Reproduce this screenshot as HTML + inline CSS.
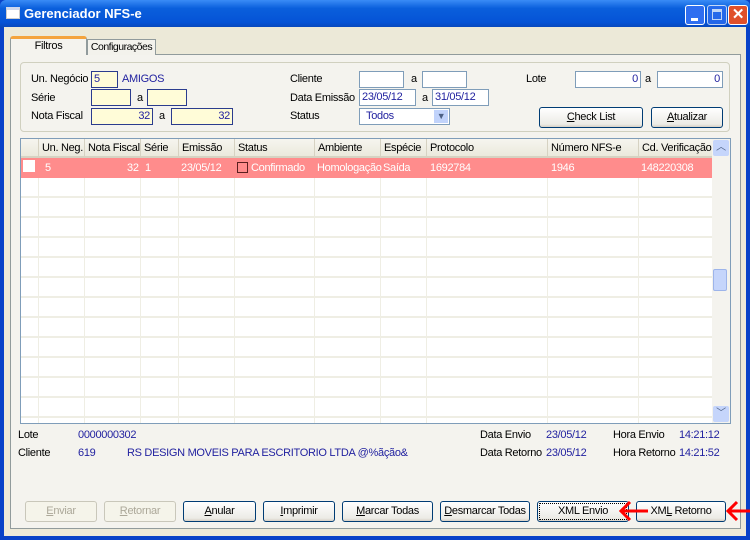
<!DOCTYPE html>
<html><head><meta charset="utf-8"><style>
*{margin:0;padding:0;box-sizing:border-box}
body{width:750px;height:540px;overflow:hidden;background:#0842c8;font-family:"Liberation Sans",sans-serif;font-size:11px;letter-spacing:-0.3px;color:#000;position:relative;white-space:nowrap}
.a{position:absolute}
.title{left:0;top:0;width:750px;height:28px;background:linear-gradient(#3a8cf6,#0a5fdc 30%,#0553d6 80%,#0846b8);border-radius:6px 6px 0 0}
.body{left:4px;top:27px;width:742px;height:509px;background:#ece9d8}
.panel{left:10px;top:54px;width:731px;height:475px;background:#f4f3ee;border:1px solid #919b9c}
.grp{left:20px;top:62px;width:710px;height:70px;border:1px solid #d0d0bf;border-radius:4px}
.in{position:absolute;height:17px;border:1px solid #7f9db9;background:#fff;color:#2222a0;font-size:11px;line-height:15px;padding:0 2px}
.y{background:#fffcd8;border-color:#2b3c8e}
.r{text-align:right}
.btn{position:absolute;height:21px;border:1px solid #003c74;border-radius:3px;background:linear-gradient(#fff,#ecebe6 85%,#d6d0c5);text-align:center;line-height:19px;font-size:11px}
.dis{border-color:#c9c7ba;color:#aca899;background:#f5f4ea}
.grid{left:20px;top:138px;width:711px;height:286px;background:#fff;border:1px solid #7f9db9;overflow:hidden}
.hd{position:absolute;top:0;height:19px;background:linear-gradient(#f6f5ef,#ebe9dc);border-bottom:2px solid #d6d2c2;line-height:19px;padding-left:3px;overflow:hidden}
.b{color:#2222a0}
u{text-decoration:underline}
</style></head><body>
<div class="a title"></div>
<div class="a" style="left:6px;top:7px;width:14px;height:12px;background:#fff;border:1px solid #ccc;border-top:3px solid #cfd9ee"></div>
<div class="a" style="left:24px;top:6px;color:#fff;font-weight:bold;font-size:13px;letter-spacing:0">Gerenciador NFS-e</div>
<div class="a" style="left:685px;top:5px;width:20px;height:20px;border:1px solid #fff;border-radius:3px;background:#2f6ef0"><div class="a" style="left:5px;top:12px;width:7px;height:3px;background:#fff"></div></div>
<div class="a" style="left:707px;top:5px;width:20px;height:20px;border:1px solid #fff;border-radius:3px;background:#2f6ef0;opacity:.75"><div class="a" style="left:4px;top:3px;width:10px;height:11px;border:1px solid #fff;border-top-width:3px"></div></div>
<div class="a" style="left:728px;top:5px;width:20px;height:20px;border:1px solid #fff;border-radius:3px;background:#e0502a;color:#fff;font-weight:bold;font-size:15px;text-align:center;line-height:18px">✕</div>
<div class="a body"></div>
<div class="a panel"></div>
<div class="a" style="left:10px;top:36px;width:77px;height:19px;background:#f4f3ee;border:1px solid #919b9c;border-bottom:none;border-top:3px solid #f4a33c;border-radius:3px 3px 0 0;text-align:center;line-height:14px">Filtros</div>
<div class="a" style="left:87px;top:39px;width:69px;height:16px;background:#f3f2ec;border:1px solid #919b9c;border-bottom:none;text-align:center;line-height:15px;font-size:10.5px;letter-spacing:-0.5px">Configurações</div>
<div class="a grp"></div>
<div class="a" style="left:31px;top:73px">Un. Negócio</div>
<div class="a" style="left:31px;top:92px">Série</div>
<div class="a" style="left:31px;top:110px">Nota Fiscal</div>
<div class="in y" style="left:91px;top:71px;width:27px">5</div>
<div class="a b" style="left:122px;top:73px">AMIGOS</div>
<div class="in y" style="left:91px;top:89px;width:40px"></div>
<div class="a" style="left:137px;top:92px">a</div>
<div class="in y" style="left:147px;top:89px;width:40px"></div>
<div class="in y r" style="left:91px;top:108px;width:62px">32</div>
<div class="a" style="left:159px;top:110px">a</div>
<div class="in y r" style="left:171px;top:108px;width:62px">32</div>
<div class="a" style="left:290px;top:73px">Cliente</div>
<div class="a" style="left:290px;top:92px">Data Emissão</div>
<div class="a" style="left:290px;top:110px">Status</div>
<div class="in" style="left:359px;top:71px;width:45px"></div>
<div class="a" style="left:411px;top:73px">a</div>
<div class="in" style="left:422px;top:71px;width:45px"></div>
<div class="in" style="left:359px;top:89px;width:57px">23/05/12</div>
<div class="a" style="left:422px;top:92px">a</div>
<div class="in" style="left:432px;top:89px;width:57px">31/05/12</div>
<div class="in" style="left:359px;top:108px;width:91px;padding-left:6px">Todos<div class="a" style="right:1px;top:1px;width:14px;height:13px;background:#c1d3fb;color:#4d6185;font-size:9px;text-align:center;line-height:13px">▼</div></div>
<div class="a" style="left:526px;top:73px">Lote</div>
<div class="in r" style="left:575px;top:71px;width:66px">0</div>
<div class="a" style="left:645px;top:73px">a</div>
<div class="in r" style="left:657px;top:71px;width:66px">0</div>
<div class="btn" style="left:539px;top:107px;width:104px"><u>C</u>heck List</div>
<div class="btn" style="left:651px;top:107px;width:72px"><u>A</u>tualizar</div>
<div class="a grid">
<div class="hd" style="left:0;width:17px"></div>
<div class="hd" style="left:17px;width:46px;border-left:1px solid #d6d2c2">Un. Neg.</div>
<div class="hd" style="left:63px;width:56px;border-left:1px solid #d6d2c2">Nota Fiscal</div>
<div class="hd" style="left:119px;width:38px;border-left:1px solid #d6d2c2">Série</div>
<div class="hd" style="left:157px;width:56px;border-left:1px solid #d6d2c2">Emissão</div>
<div class="hd" style="left:213px;width:80px;border-left:1px solid #d6d2c2">Status</div>
<div class="hd" style="left:293px;width:66px;border-left:1px solid #d6d2c2">Ambiente</div>
<div class="hd" style="left:359px;width:46px;border-left:1px solid #d6d2c2">Espécie</div>
<div class="hd" style="left:405px;width:121px;border-left:1px solid #d6d2c2">Protocolo</div>
<div class="hd" style="left:526px;width:91px;border-left:1px solid #d6d2c2">Número NFS-e</div>
<div class="hd" style="left:617px;width:74px;border-left:1px solid #d6d2c2">Cd. Verificação</div>
<div class="a" style="left:0;top:39px;width:691px;height:247px;background:repeating-linear-gradient(#fff 0 18px,#efeee4 18px 20px)"></div>
<div class="a" style="left:0;top:19px;width:691px;height:267px;background:linear-gradient(90deg,transparent 17px,#efeee4 17px 18px,transparent 18px 63px,#efeee4 63px 64px,transparent 64px 119px,#efeee4 119px 120px,transparent 120px 157px,#efeee4 157px 158px,transparent 158px 213px,#efeee4 213px 214px,transparent 214px 293px,#efeee4 293px 294px,transparent 294px 359px,#efeee4 359px 360px,transparent 360px 405px,#efeee4 405px 406px,transparent 406px 526px,#efeee4 526px 527px,transparent 527px 617px,#efeee4 617px 618px,transparent 618px)"></div>
<div class="a" style="left:0;top:19px;width:691px;height:20px;background:#ff8c8c;color:#fff;line-height:20px">
<div class="a" style="left:2px;top:2px;width:12px;height:12px;background:#fff"></div>
<span class="a" style="left:24px">5</span><span class="a" style="left:106px">32</span><span class="a" style="left:124px">1</span><span class="a" style="left:160px">23/05/12</span>
<div class="a" style="left:216px;top:4px;width:11px;height:11px;border:1px solid #5a2020"></div>
<span class="a" style="left:230px">Confirmado</span><span class="a" style="left:296px">Homologação</span><span class="a" style="left:362px">Saída</span><span class="a" style="left:409px">1692784</span><span class="a" style="left:530px">1946</span><span class="a" style="left:620px">148220308</span></div>
<div class="a" style="left:691px;top:0;width:18px;height:284px;background:#f4f3ee"></div>
<div class="a" style="left:692px;top:1px;width:16px;height:16px;background:#c5d5fb;border-radius:2px;color:#4d6185;font-size:10px;text-align:center;line-height:16px">︿</div>
<div class="a" style="left:692px;top:130px;width:14px;height:22px;background:#c5d5fb;border:1px solid #9db4ea;border-radius:2px"></div>
<div class="a" style="left:692px;top:267px;width:16px;height:16px;background:#c5d5fb;border-radius:2px;color:#4d6185;font-size:10px;text-align:center;line-height:16px">﹀</div>
</div>
<div class="a" style="left:18px;top:429px">Lote</div>
<div class="a b" style="left:78px;top:429px">0000000302</div>
<div class="a" style="left:18px;top:447px">Cliente</div>
<div class="a b" style="left:78px;top:447px">619</div>
<div class="a b" style="left:127px;top:447px">RS DESIGN MOVEIS PARA ESCRITORIO LTDA @%ãção&amp;</div>
<div class="a" style="left:480px;top:429px">Data Envio</div>
<div class="a b" style="left:546px;top:429px">23/05/12</div>
<div class="a" style="left:613px;top:429px">Hora Envio</div>
<div class="a b" style="left:679px;top:429px">14:21:12</div>
<div class="a" style="left:480px;top:447px">Data Retorno</div>
<div class="a b" style="left:546px;top:447px">23/05/12</div>
<div class="a" style="left:613px;top:447px">Hora Retorno</div>
<div class="a b" style="left:679px;top:447px">14:21:52</div>
<div class="btn dis" style="left:25px;top:501px;width:72px"><u>E</u>nviar</div>
<div class="btn dis" style="left:104px;top:501px;width:72px"><u>R</u>etornar</div>
<div class="btn" style="left:183px;top:501px;width:73px"><u>A</u>nular</div>
<div class="btn" style="left:263px;top:501px;width:72px"><u>I</u>mprimir</div>
<div class="btn" style="left:342px;top:501px;width:91px"><u>M</u>arcar Todas</div>
<div class="btn" style="left:440px;top:501px;width:90px"><u>D</u>esmarcar Todas</div>
<div class="btn" style="left:537px;top:501px;width:92px;outline:1px dotted #000;outline-offset:-3px">XML Envio</div>
<div class="btn" style="left:636px;top:501px;width:90px">XM<u>L</u> Retorno</div>
<svg class="a" style="left:0;top:0" width="750" height="540"><g stroke="#f00" stroke-width="3" fill="none"><path d="M648 511H622M630 502L621 511L630 520"/><path d="M750 511H729M737 502L728 511L737 520"/></g></svg>
</body></html>
